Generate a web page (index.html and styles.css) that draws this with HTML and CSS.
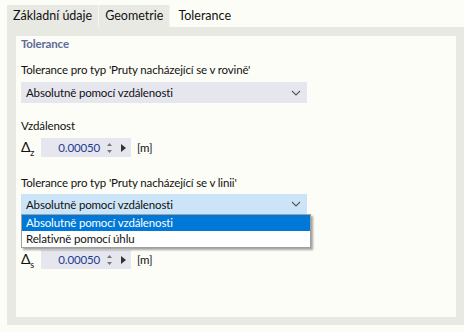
FILE: index.html
```html
<!DOCTYPE html>
<html lang="cs">
<head>
  <meta charset="UTF-8" />
  <title>Tolerance</title>
  <link rel="stylesheet" href="styles.css">
</head>
<body>

  <div class="tabs">
    <div class="tab">Základní údaje</div>
    <div class="tab">Geometrie</div>
    <div class="tab active">Tolerance</div>
  </div>

  <div class="panel">
    <div class="content">
      <div class="group-title">Tolerance</div>

      <div class="label first">Tolerance pro typ 'Pruty nacházející se v rovině'</div>
      <div class="select">
        <span>Absolutně pomocí vzdálenosti</span>
        <svg class="chevron" width="10" height="6" viewBox="0 0 10 6"><path d="M1 1 L5 5 L9 1" fill="none" stroke="#555" stroke-width="1.1"/></svg>
      </div>

      <div class="label gap">Vzdálenost</div>
      <div class="num-row">
        <span class="delta">Δ<sub>z</sub></span>
        <div class="num-input">
          <span class="value">0.00050</span>
          <svg class="spin" width="7" height="12" viewBox="0 0 7 12"><path d="M3.5 1 L6 4 L1 4 Z M1 8 L6 8 L3.5 11 Z" fill="#777"/></svg>
          <svg class="arrow" width="5" height="8" viewBox="0 0 5 8"><path d="M0 0 L5 4 L0 8 Z" fill="#333"/></svg>
        </div>
        <span class="unit">[m]</span>
      </div>

      <div class="label gap2">Tolerance pro typ 'Pruty nacházející se v linii'</div>
      <div class="dropdown">
        <div class="select open">
          <span>Absolutně pomocí vzdálenosti</span>
          <svg class="chevron" width="10" height="6" viewBox="0 0 10 6"><path d="M1 1 L5 5 L9 1" fill="none" stroke="#555" stroke-width="1.1"/></svg>
        </div>
        <div class="list">
          <div class="option selected">Absolutně pomocí vzdálenosti</div>
          <div class="option">Relativně pomocí úhlu</div>
        </div>
      </div>

      <div class="label gap hidden">Vzdálenost</div>
      <div class="num-row">
        <span class="delta">Δ<sub>s</sub></span>
        <div class="num-input">
          <span class="value">0.00050</span>
          <svg class="spin" width="7" height="12" viewBox="0 0 7 12"><path d="M3.5 1 L6 4 L1 4 Z M1 8 L6 8 L3.5 11 Z" fill="#777"/></svg>
          <svg class="arrow" width="5" height="8" viewBox="0 0 5 8"><path d="M0 0 L5 4 L0 8 Z" fill="#333"/></svg>
        </div>
        <span class="unit">[m]</span>
      </div>
    </div>
  </div>

</body>
</html>
```

FILE: styles.css
```css
body {
  margin: 0;
  background-color: #fdfdf7;
  font-family: Lato, "Noto Sans", sans-serif;
  font-size: 11.5px;
  letter-spacing: -0.15px;
  color: #111;
  width: 464px;
  height: 332px;
  overflow: hidden;
}
.tabs {
  display: flex;
  margin: 5px 0 0 7px;
}
.tab {
  height: 22px;
  line-height: 22px;
  padding: 0 6px;
  font-size: 12.5px;
  letter-spacing: 0;
  background-color: #e9e9e4;
  border-right: 1px solid #f6f6f1;
}
.tab.active {
  background-color: #fdfdf7;
  border-right: none;
  padding: 0 8px;
}
.panel {
  margin-left: 7px;
  background-color: #e9e9e4;
  padding: 9px 8px 8px 9px;
}
.content {
  background-color: #fdfdf7;
  height: 281px;
  padding: 0 5px;
}
.group-title {
  line-height: 16px;
  font-weight: 700;
  color: #5b6c98;
}
.label {
  line-height: 16px;
}
.label.first {
  margin-top: 10px;
}
.label.gap {
  margin-top: 15px;
}
.label.gap2 {
  margin-top: 17px;
}
.hidden {
  visibility: hidden;
}
.select {
  margin-top: 4px;
  width: 286px;
  height: 21px;
  box-sizing: border-box;
  background-color: #e6e6ef;
  display: flex;
  align-items: center;
  justify-content: space-between;
  padding: 0 6px 0 5px;
}
.select.open {
  margin-top: 3px;
  background-color: #cce4f7;
}
.dropdown {
  position: relative;
}
.list {
  position: absolute;
  top: 20px;
  left: 0;
  width: 288px;
  background-color: #fff;
  border: 1px solid #a0a0a0;
  box-shadow: 2px 2px 2px rgba(0, 0, 0, 0.35);
  z-index: 2;
}
.option {
  height: 16px;
  line-height: 16px;
  padding-left: 4px;
}
.option.selected {
  background-color: #0078d7;
  color: #fff;
}
.num-row {
  display: flex;
  align-items: center;
  margin-top: 4px;
}
.delta {
  width: 20px;
  font-size: 14px;
}
.delta sub {
  font-size: 9px;
}
.num-input {
  width: 90px;
  height: 19px;
  background-color: #e6e6ef;
  display: flex;
  align-items: center;
  justify-content: flex-end;
  padding-right: 5px;
  box-sizing: border-box;
}
.value {
  color: #1d3d8f;
  margin-right: 6px;
}
.spin {
  margin-right: 8px;
}
.unit {
  margin-left: 6px;
}
```
